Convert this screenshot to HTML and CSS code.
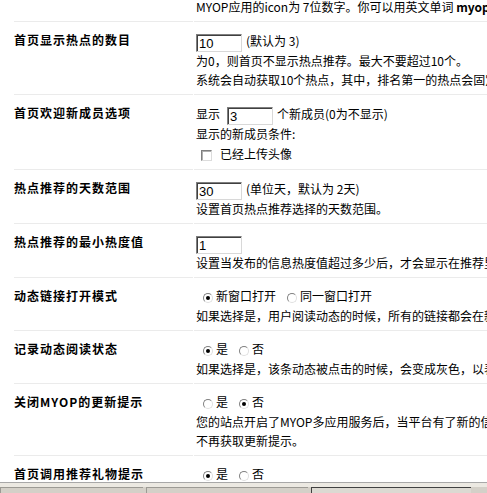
FILE: index.html
```html
<!DOCTYPE html>
<html lang="zh-CN">
<head>
  <meta charset="UTF-8">
  <title>站点设置</title>
  <link rel="stylesheet" href="styles.css">
</head>
<body>
  <div class="settings">
    <div class="row">
      <div class="label"></div>
      <div class="value">
        <div class="line">MYOP应用的icon为 7位数字。你可以用英文单词 <b>myop</b> 加数字来代替</div>
      </div>
    </div>

    <div class="row">
      <div class="label">首页显示热点的数目</div>
      <div class="value">
        <div class="ctrl"><input class="txt" type="text" value="10">(默认为 3)</div>
        <div class="line">为0，则首页不显示热点推荐。最大不要超过10个。</div>
        <div class="line">系统会自动获取10个热点，其中，排名第一的热点会固定在首页显示</div>
      </div>
    </div>

    <div class="row">
      <div class="label">首页欢迎新成员选项</div>
      <div class="value">
        <div class="ctrl">显示<input class="txt txt-mid" type="text" value="3">个新成员(0为不显示)</div>
        <div class="line">显示的新成员条件:</div>
        <div class="ctrl"><span class="check"></span>已经上传头像</div>
      </div>
    </div>

    <div class="row">
      <div class="label">热点推荐的天数范围</div>
      <div class="value">
        <div class="ctrl"><input class="txt" type="text" value="30">(单位天，默认为 2天)</div>
        <div class="line">设置首页热点推荐选择的天数范围。</div>
      </div>
    </div>

    <div class="row">
      <div class="label">热点推荐的最小热度值</div>
      <div class="value">
        <div class="ctrl"><input class="txt" type="text" value="1"></div>
        <div class="line">设置当发布的信息热度值超过多少后，才会显示在推荐里</div>
      </div>
    </div>

    <div class="row">
      <div class="label">动态链接打开模式</div>
      <div class="value">
        <div class="ctrl choice">
          <span class="opt"><span class="radio on"></span>新窗口打开</span><span class="opt"><span class="radio"></span>同一窗口打开</span>
        </div>
        <div class="line">如果选择是，用户阅读动态的时候，所有的链接都会在新窗口打开</div>
      </div>
    </div>

    <div class="row">
      <div class="label">记录动态阅读状态</div>
      <div class="value">
        <div class="ctrl choice">
          <span class="opt"><span class="radio on"></span>是</span><span class="opt"><span class="radio"></span>否</span>
        </div>
        <div class="line">如果选择是，该条动态被点击的时候，会变成灰色，以表示已读</div>
      </div>
    </div>

    <div class="row">
      <div class="label">关闭MYOP的更新提示</div>
      <div class="value">
        <div class="ctrl choice">
          <span class="opt"><span class="radio"></span>是</span><span class="opt"><span class="radio on"></span>否</span>
        </div>
        <div class="line">您的站点开启了MYOP多应用服务后，当平台有了新的信息时会提示您，选择是则</div>
        <div class="line">不再获取更新提示。</div>
      </div>
    </div>

    <div class="row">
      <div class="label">首页调用推荐礼物提示</div>
      <div class="value">
        <div class="ctrl choice">
          <span class="opt"><span class="radio on"></span>是</span><span class="opt"><span class="radio"></span>否</span>
        </div>
        <div class="line">如果选择是，首页会显示推荐的礼物</div>
      </div>
    </div>
  </div>

  <div class="statusbar">
    <div class="status-top"></div>
    <div class="status-panels">
      <div class="panel p1"></div>
      <div class="panel p2"></div>
      <div class="panel p3"></div>
    </div>
  </div>
</body>
</html>
```

FILE: styles.css
```css
body {
    margin: 0;
    background: #fff;
    color: #000;
    font-family: "Noto Sans CJK SC", sans-serif;
    font-size: 12px;
    overflow: hidden;
}

.settings {
    margin: -11px 0 0 14px;
    width: 800px;
}

.row {
    display: grid;
    grid-template-columns: 179px 1fr;
    column-gap: 1px;
}

.label,
.value {
    padding: 8px 0 5px;
    border-bottom: 1px solid #ebebeb;
}

.label {
    font-weight: bold;
    line-height: 19px;
    letter-spacing: 1px;
}

.value {
    padding-left: 2px;
    white-space: nowrap;
}

.line {
    height: 19px;
    line-height: 19px;
}

.ctrl {
    height: 21px;
    line-height: 21px;
}

.ctrl.choice {
    height: 20px;
    line-height: 20px;
}

.txt {
    box-sizing: border-box;
    width: 46px;
    height: 18px;
    margin: 0 4px 0 0;
    padding: 1px 2px 0;
    border: 1px solid;
    border-color: #7f7f7f #d8d8d8 #d8d8d8 #7f7f7f;
    box-shadow: inset 1px 1px 0 #404040;
    font-family: "Liberation Sans", sans-serif;
    font-size: 13px;
    color: #000;
    vertical-align: middle;
    outline: none;
}

.txt-mid {
    margin-left: 7px;
}

.check {
    display: inline-block;
    box-sizing: border-box;
    width: 11px;
    height: 11px;
    margin: 0 8px 0 5px;
    border: 1px solid;
    border-color: #7f7f7f #dcdcdc #dcdcdc #7f7f7f;
    box-shadow: inset 1px 1px 0 #b0b0b0;
    background: #fff;
    vertical-align: middle;
}

.opt {
    margin-right: 4px;
}

.radio {
    display: inline-block;
    position: relative;
    box-sizing: border-box;
    width: 10px;
    height: 10px;
    margin: 0 3px 0 7px;
    border: 1px solid;
    border-color: #808080 #e0e0e0 #e0e0e0 #808080;
    border-radius: 50%;
    background: #fff;
    vertical-align: middle;
}

.radio.on::after {
    content: "";
    position: absolute;
    left: 2px;
    top: 2px;
    width: 4px;
    height: 4px;
    border-radius: 50%;
    background: #000;
}

.statusbar {
    position: fixed;
    left: 0;
    right: 0;
    bottom: 0;
    height: 11px;
    background: #d4d0c8;
}

.status-top {
    height: 4px;
    border-top: 1px solid #a8a8a8;
    background: #ece9e2;
}

.status-panels {
    display: flex;
    gap: 3px;
    height: 6px;
}

.panel {
    box-sizing: border-box;
    height: 6px;
    border-top: 1px solid #9c9a94;
    border-left: 1px solid #9c9a94;
}

.p1 {
    width: 143px;
}

.p2 {
    width: 162px;
}

.p3 {
    width: 160px;
    border-color: #404040;
    background: #dcd9d2;
}
```
